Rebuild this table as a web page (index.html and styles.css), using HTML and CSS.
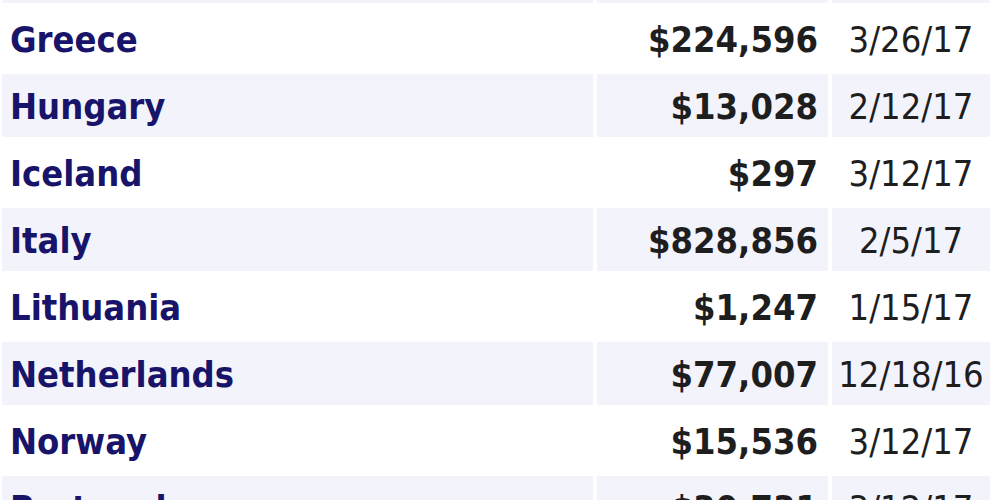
FILE: index.html
```html
<!DOCTYPE html>
<html>
<head>
<meta charset="utf-8">
<link rel="stylesheet" href="styles.css">
</head>
<body>
<table class="sales">
  <tr class="band top"><td class="name"></td><td class="amt"></td><td class="date"></td></tr>
  <tr><td class="name">Greece</td><td class="amt">$224,596</td><td class="date">3/26/17</td></tr>
  <tr class="band"><td class="name">Hungary</td><td class="amt">$13,028</td><td class="date">2/12/17</td></tr>
  <tr><td class="name">Iceland</td><td class="amt">$297</td><td class="date">3/12/17</td></tr>
  <tr class="band"><td class="name">Italy</td><td class="amt">$828,856</td><td class="date">2/5/17</td></tr>
  <tr><td class="name">Lithuania</td><td class="amt">$1,247</td><td class="date">1/15/17</td></tr>
  <tr class="band"><td class="name">Netherlands</td><td class="amt">$77,007</td><td class="date">12/18/16</td></tr>
  <tr><td class="name">Norway</td><td class="amt">$15,536</td><td class="date">3/12/17</td></tr>
  <tr class="band"><td class="name">Portugal</td><td class="amt">$30,731</td><td class="date">3/12/17</td></tr>
</table>
</body>
</html>
```
FILE: styles.css
```css
html, body {
  margin: 0;
  padding: 0;
  background: #ffffff;
  overflow: hidden;
}
.sales {
  border-collapse: separate;
  border-spacing: 4px;
  margin: -4px 0 0 -2px;
  font-family: "DejaVu Sans Condensed", "DejaVu Sans", sans-serif;
  font-size: 36px;
  line-height: 40px;
}
.sales td {
  height: 63px;
  padding: 3px 0 0 0;
  vertical-align: middle;
  box-sizing: border-box;
  white-space: nowrap;
}
.sales tr.top td {
  height: 3px;
  padding: 0;
}
.band td {
  background: #f3f3fb;
}
.name {
  width: 591px;
  padding-left: 8px !important;
  font-weight: bold;
  color: #18146a;
}
.amt {
  width: 231px;
  text-align: right;
  padding-right: 10px !important;
  font-weight: bold;
  color: #1e1e1e;
}
.date {
  width: 158px;
  text-align: center;
  color: #1e1e1e;
}
```
